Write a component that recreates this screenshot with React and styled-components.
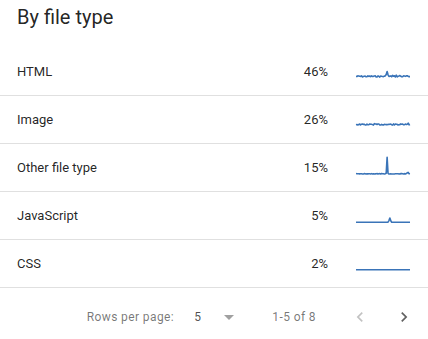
import React from 'react'
import styled, { createGlobalStyle } from 'styled-components'

const GlobalStyle = createGlobalStyle`
  html, body {
    margin: 0;
    padding: 0;
    background: #ffffff;
  }
  body {
    font-family: Roboto, "Noto Sans", Arial, sans-serif;
  }
`

const StyledCard = styled.div`
  width: 428px;
  height: 339px;
  overflow: hidden;
  background: #ffffff;
`
const StyledTitle = styled.h2`
  margin: 0;
  height: 48px;
  box-sizing: border-box;
  padding: 3px 17px 0;
  font-size: 20px;
  line-height: 28px;
  font-weight: 400;
  color: rgba(0, 0, 0, 0.87);
`
const StyledTable = styled.div`
  display: flex;
  flex-direction: column;
`
const StyledRow = styled.div`
  display: flex;
  align-items: center;
  height: 48px;
  box-sizing: border-box;
  padding: 0 18px 0 17px;
  border-bottom: 1px solid #e0e0e0;
  font-size: 13px;
  color: rgba(0, 0, 0, 0.87);
`
const StyledLabel = styled.span`
  flex: 1;
`
const StyledPercent = styled.span`
  width: 60px;
  text-align: right;
  margin-right: 28px;
`
const StyledSpark = styled.svg`
  display: block;
  width: 54px;
  height: 24px;
  overflow: visible;
`
const StyledFooter = styled.div`
  display: flex;
  align-items: center;
  justify-content: flex-end;
  height: 58px;
  padding-right: 2px;
  font-size: 12px;
  letter-spacing: 0.4px;
  color: rgba(0, 0, 0, 0.54);
`
const StyledCaption = styled.span``
const StyledSelect = styled.div`
  display: flex;
  align-items: center;
  gap: 16px;
  margin-left: 20px;
  margin-right: 31px;
  color: rgba(0, 0, 0, 0.7);
`
const StyledActions = styled.div`
  display: flex;
  margin-left: 22px;
`
const StyledIconButton = styled.button`
  display: flex;
  align-items: center;
  justify-content: center;
  width: 44px;
  height: 44px;
  padding: 0;
  border: none;
  background: none;
  color: ${(p) => (p.disabled ? 'rgba(0, 0, 0, 0.24)' : 'rgba(0, 0, 0, 0.62)')};
`

function rand(seed) {
  let s = seed
  return () => {
    s = (s * 9301 + 49297) % 233280
    return s / 233280
  }
}

function makeSeries(seed, base, amp, bumps) {
  const r = rand(seed)
  const n = 60
  const ys = []
  for (let i = 0; i < n; i++) {
    ys.push(base + (r() - 0.5) * 2 * amp)
  }
  bumps.forEach(([i, y]) => {
    ys[i] = y
  })
  return ys
}

function toPath(ys) {
  const step = 54 / (ys.length - 1)
  return ys
    .map((y, i) => (i === 0 ? 'M' : 'L') + (i * step).toFixed(2) + ' ' + y.toFixed(2))
    .join(' ')
}

const rows = [
  {
    name: 'HTML',
    pct: '46%',
    ys: makeSeries(7, 16.4, 0.7, [
      [33, 14.5],
      [34, 11.5],
      [35, 14.8],
      [40, 15.4],
      [44, 15.2],
      [48, 15.5],
    ]),
  },
  {
    name: 'Image',
    pct: '26%',
    ys: makeSeries(13, 16.5, 0.6, [
      [20, 15.6],
      [57, 15.2],
    ]),
  },
  {
    name: 'Other file type',
    pct: '15%',
    ys: makeSeries(21, 17.8, 0.25, [
      [33, 17.2],
      [34, 1.2],
      [35, 17.4],
      [56, 16.8],
      [57, 16.4],
    ]),
  },
  {
    name: 'JavaScript',
    pct: '5%',
    ys: makeSeries(3, 18.2, 0, [
      [36, 16.6],
      [37, 14],
      [38, 16.8],
    ]),
  },
  { name: 'CSS', pct: '2%', ys: makeSeries(5, 17.8, 0, []) },
]

const Sparkline = ({ ys }) => (
  <StyledSpark viewBox="0 0 54 24">
    <path d={toPath(ys)} fill="none" stroke="#3a74b8" strokeWidth="1.6" strokeLinejoin="round" />
  </StyledSpark>
)

const Icon = ({ d, size = 24, color }) => (
  <svg width={size} height={size} viewBox="0 0 24 24" fill={color || 'currentColor'}>
    <path d={d} />
  </svg>
)

export default function App() {
  return (
    <StyledCard>
      <GlobalStyle />
      <StyledTitle>By file type</StyledTitle>
      <StyledTable>
        {rows.map((row) => (
          <StyledRow key={row.name}>
            <StyledLabel>{row.name}</StyledLabel>
            <StyledPercent>{row.pct}</StyledPercent>
            <Sparkline ys={row.ys} />
          </StyledRow>
        ))}
      </StyledTable>
      <StyledFooter>
        <StyledCaption>Rows per page:</StyledCaption>
        <StyledSelect>
          <span>5</span>
          <Icon d="M7 10l5 5 5-5z" color="#a0a0a0" />
        </StyledSelect>
        <StyledCaption>1-5 of 8</StyledCaption>
        <StyledActions>
          <StyledIconButton disabled>
            <Icon size={20} d="M15.41 7.41L14 6l-6 6 6 6 1.41-1.41L10.83 12z" />
          </StyledIconButton>
          <StyledIconButton>
            <Icon size={20} d="M10 6L8.59 7.41 13.17 12l-4.58 4.59L10 18l6-6z" />
          </StyledIconButton>
        </StyledActions>
      </StyledFooter>
    </StyledCard>
  )
}
